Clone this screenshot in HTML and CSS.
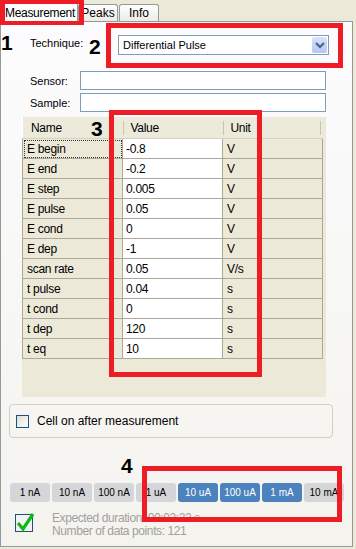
FILE: index.html
```html
<!DOCTYPE html>
<html lang="en">
<head>
    <meta charset="UTF-8">
    <title>Measurement</title>
    <link rel="stylesheet" href="styles.css">
</head>
<body>
    <div class="window">
        <div class="tabs">
            <div class="tab active">Measurement</div>
            <div class="tab">Peaks</div>
            <div class="tab">Info</div>
        </div>

        <div class="panel">
            <div class="form-row technique">
                <label>Technique:</label>
                <div class="select">
                    <span>Differential Pulse</span>
                    <span class="drop">
                        <svg width="10" height="7" viewBox="0 0 10 7"><path d="M1 1 L5 5 L9 1" fill="none" stroke="#4d6185" stroke-width="2.2"/></svg>
                    </span>
                </div>
            </div>
            <div class="form-row">
                <label>Sensor:</label>
                <div class="input"></div>
            </div>
            <div class="form-row">
                <label>Sample:</label>
                <div class="input"></div>
            </div>

            <div class="grid-area">
                <table class="grid">
                    <thead>
                        <tr><th>Name</th><th><i></i>Value</th><th><i></i>Unit<b></b></th></tr>
                    </thead>
                    <tbody>
                        <tr><td class="focus">E begin</td><td class="val">-0.8</td><td>V</td></tr>
                        <tr><td>E end</td><td class="val">-0.2</td><td>V</td></tr>
                        <tr><td>E step</td><td class="val">0.005</td><td>V</td></tr>
                        <tr><td>E pulse</td><td class="val">0.05</td><td>V</td></tr>
                        <tr><td>E cond</td><td class="val">0</td><td>V</td></tr>
                        <tr><td>E dep</td><td class="val">-1</td><td>V</td></tr>
                        <tr><td>scan rate</td><td class="val">0.05</td><td>V/s</td></tr>
                        <tr><td>t pulse</td><td class="val">0.04</td><td>s</td></tr>
                        <tr><td>t cond</td><td class="val">0</td><td>s</td></tr>
                        <tr><td>t dep</td><td class="val">120</td><td>s</td></tr>
                        <tr><td>t eq</td><td class="val">10</td><td>s</td></tr>
                    </tbody>
                </table>
            </div>

            <div class="cell-group">
                <span class="checkbox"></span>
                <span>Cell on after measurement</span>
            </div>

            <div class="ranges">
                <span class="range">1 nA</span>
                <span class="range">10 nA</span>
                <span class="range">100 nA</span>
                <span class="range">1 uA</span>
                <span class="range on">10 uA</span>
                <span class="range on">100 uA</span>
                <span class="range on">1 mA</span>
                <span class="range">10 mA</span>
            </div>

            <div class="status">
                <span class="ok">
                    <svg width="20" height="22" viewBox="0 0 20 22">
                        <rect x="0.5" y="3.5" width="17" height="17" fill="#f2f2f6" stroke="#1c5180"/>
                        <path d="M3 12 L8 18 L18 3" fill="none" stroke="#12b812" stroke-width="3.2"/>
                    </svg>
                </span>
                <div class="status-text">
                    <div>Expected duration: 00:02:22 s</div>
                    <div>Number of data points: 121</div>
                </div>
            </div>
        </div>

        <!-- annotations drawn over the screenshot -->
        <div class="mark box1"></div>
        <div class="mark box2"></div>
        <div class="mark box3"></div>
        <div class="mark box4"></div>
        <span class="num n1">1</span>
        <span class="num n2">2</span>
        <span class="num n3">3</span>
        <span class="num n4">4</span>
    </div>
</body>
</html>
```

FILE: styles.css
```css
body {
    margin: 0;
    background-color: #ece9d8;
    font-family: "Liberation Sans", Arial, sans-serif;
    font-size: 11px;
    color: #000;
}

.window {
    position: relative;
    width: 356px;
    height: 549px;
    overflow: hidden;
}

/* tabs */

.tabs {
    display: flex;
    align-items: flex-end;
    height: 21px;
    padding-left: 2px;
}

.tab {
    width: 38px;
    height: 16px;
    margin-right: 1px;
    line-height: 16px;
    text-align: center;
    font-size: 12px;
    background: linear-gradient(#ffffff, #ecebe6);
    border: 1px solid #919b9c;
    border-bottom: none;
    border-radius: 3px 3px 0 0;
}

.tab.active {
    width: 74px;
    height: 19px;
    margin-right: 0;
    background: #fcfcfe;
    line-height: 20px;
    margin-bottom: -1px;
    position: relative;
    overflow: hidden;
    white-space: nowrap;
    letter-spacing: -0.3px;
}

/* panel */

.panel {
    width: 351px;
    height: 524px;
    border: 1px solid #919b9c;
    background: linear-gradient(#fcfcfe, #f4f3ee);
    display: flex;
    flex-direction: column;
}

.form-row {
    display: flex;
    align-items: center;
    padding-left: 29px;
    margin-top: 3px;
}

.form-row label {
    width: 50px;
}

.technique {
    margin-top: 13px;
    margin-bottom: 13px;
    align-items: flex-start;
}

.technique label {
    width: 88px;
    padding-top: 2px;
}

.select {
    width: 205px;
    height: 18px;
    border: 1px solid #7f9db9;
    background: #fff;
    display: flex;
    align-items: center;
    justify-content: space-between;
    padding-left: 4px;
}

.drop {
    width: 15px;
    height: 16px;
    margin-right: 1px;
    border-radius: 2px;
    background: linear-gradient(#d6e2fd, #b4c8f6);
    display: flex;
    align-items: center;
    justify-content: center;
}

.input {
    width: 244px;
    height: 17px;
    border: 1px solid #7f9db9;
    background: #fff;
}

/* parameter grid */

.grid-area {
    width: 304px;
    height: 280px;
    margin: 5px 0 0 21px;
    background: #ece9d8;
}

.grid {
    border-collapse: collapse;
    width: 301px;
    table-layout: fixed;
    font-size: 12px;
    letter-spacing: -0.3px;
}

.grid th {
    height: 21px;
    padding: 0 0 0 8px;
    text-align: left;
    font-weight: normal;
    background: #ebeadb;
    border-bottom: 1px solid #d6d2c2;
    position: relative;
}

.grid th:first-child {
    border-left: 1px solid #ffffff;
}

.grid th i {
    position: absolute;
    left: 0;
    top: 4px;
    width: 1px;
    height: 14px;
    background: #c7c5b2;
}

.grid th b {
    position: absolute;
    right: 2px;
    top: 4px;
    width: 1px;
    height: 14px;
    background: #c7c5b2;
}

.grid td {
    height: 19px;
    padding: 0 0 0 4px;
    border: 1px solid #aca899;
    background: #ece9d8;
    white-space: nowrap;
}

.grid td.val {
    background: #ffffff;
    padding-left: 3px;
}

.grid td.focus {
    outline: 1px dotted #333;
    outline-offset: -2px;
}

/* checkbox group */

.cell-group {
    display: flex;
    align-items: center;
    gap: 8px;
    width: 316px;
    height: 32px;
    margin: 7px 0 0 8px;
    padding-left: 6px;
    border: 1px solid #d0d0bf;
    border-radius: 4px;
    font-size: 12px;
}

.checkbox {
    width: 11px;
    height: 11px;
    border: 1px solid #1c5180;
    background: linear-gradient(135deg, #dcdcd7, #ffffff);
}

/* current ranges */

.ranges {
    display: flex;
    gap: 2px;
    margin: 45px 0 0 9px;
}

.range {
    width: 40px;
    height: 19px;
    line-height: 19px;
    text-align: center;
    font-size: 10px;
    border-radius: 3px;
    background: #d6d5da;
    flex-shrink: 0;
}

.range.on {
    background: #4c82bd;
    color: #ffffff;
}

/* status */

.status {
    display: flex;
    gap: 17px;
    margin: 9px 0 0 14px;
}

.ok {
    width: 20px;
    height: 22px;
}

.status-text {
    color: #a0a0a0;
    font-size: 12px;
    letter-spacing: -0.4px;
    line-height: 13px;
    padding-top: 1px;
}

/* red annotation boxes and numbers */

.mark {
    position: absolute;
    border: 5px solid #ee1c25;
}

.box1 { left: 0; top: 0; width: 74px; height: 17px; border-width: 4px 5px; }
.box2 { left: 106px; top: 23px; width: 227px; height: 35px; }
.box3 { left: 109px; top: 110px; width: 143px; height: 257px; }
.box4 { left: 142px; top: 466px; width: 190px; height: 46px; }

.num {
    position: absolute;
    font-family: "Liberation Sans", Arial, sans-serif;
    font-weight: bold;
    font-size: 21px;
    line-height: 21px;
}

.n1 { left: 1px; top: 32px; }
.n2 { left: 89px; top: 36px; }
.n3 { left: 91px; top: 118px; }
.n4 { left: 121px; top: 455px; }
```
